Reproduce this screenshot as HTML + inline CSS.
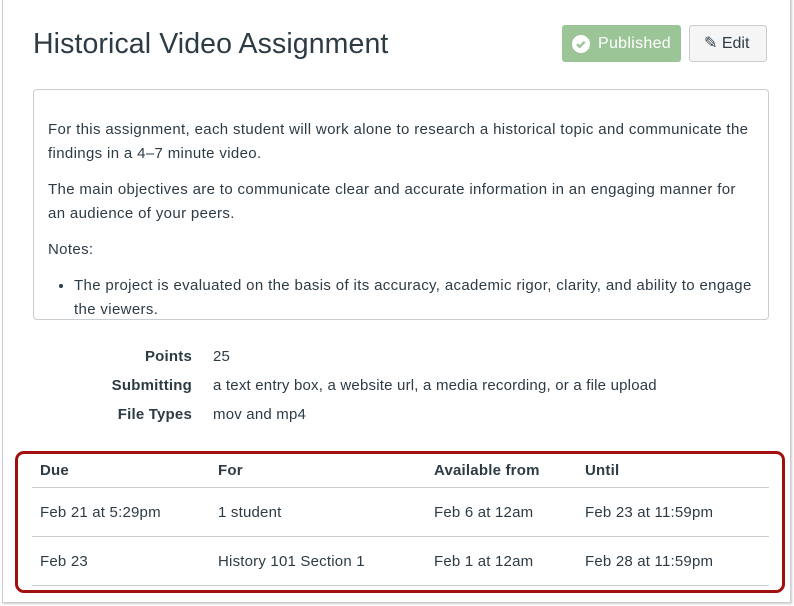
<!DOCTYPE html>
<html><head><style>
body{margin:0;width:794px;height:606px;background:#fff;font-family:"Liberation Sans",sans-serif;color:#2d3b45;position:relative;overflow:hidden}
.frame{position:absolute;left:2px;top:-2px;width:787px;height:603px;border:1px solid #c7cdd1;box-shadow:1px 1px 2px rgba(0,0,0,.2)}
h1{position:absolute;left:33px;top:28px;margin:0;font-weight:normal;font-size:28.5px;color:#2d3b45;letter-spacing:0.1px}
.pub{position:absolute;left:562px;top:25px;width:119px;height:37px;background:#9bc497;border-radius:3px;color:#fff;font-size:16px;box-sizing:border-box;padding-left:36px;line-height:37px;letter-spacing:0.3px}
.pub svg{position:absolute;left:10px;top:10px}
.edit{position:absolute;left:689px;top:25px;width:78px;height:37px;background:#f5f5f5;border:1px solid #c7cdd1;border-radius:3px;box-sizing:border-box;font-size:16px;line-height:35px;padding-left:14px}
.box{position:absolute;left:33px;top:89px;width:736px;height:231px;border:1px solid #c7cdd1;border-radius:4px;box-sizing:border-box;font-size:15px;line-height:24px;padding:28px 14px 0 14px;overflow:hidden;letter-spacing:0.35px}
.box p{margin:0 0 12px}
.box ul{margin:0;padding-left:26px}
.meta{position:absolute;font-size:15px;letter-spacing:0.2px}
.lbl{position:absolute;right:602px;font-weight:bold;white-space:nowrap}
.val{position:absolute;left:213px;white-space:nowrap}
.red{position:absolute;left:15px;top:451px;width:770px;height:142px;border:3px solid #a30e0e;border-radius:9px;box-sizing:border-box}
.t{position:absolute;font-size:15px;white-space:nowrap;letter-spacing:0.2px}
.hr{position:absolute;left:32px;width:737px;height:1px;background:#c7cdd1}
</style></head><body>
<div class="frame"></div>
<h1>Historical Video Assignment</h1>
<div class="pub"><svg width="18" height="18" viewBox="0 0 18 18"><circle cx="9" cy="9" r="9" fill="#fff"/><path d="M5 9.2l2.6 2.6 5-5" stroke="#9bc497" stroke-width="2.4" fill="none"/></svg>Published</div>
<div class="edit">✎ Edit</div>
<div class="box">
<p>For this assignment, each student will work alone to research a historical topic and communicate the findings in a 4–7 minute video.</p>
<p>The main objectives are to communicate clear and accurate information in an engaging manner for<br>an audience of your peers.</p>
<p>Notes:</p>
<ul><li>The project is evaluated on the basis of its accuracy, academic rigor, clarity, and ability to engage<br>the viewers.</li></ul>
</div>
<div class="lbl meta" style="top:348px">Points</div><div class="val meta" style="top:348px">25</div>
<div class="lbl meta" style="top:377px">Submitting</div><div class="val meta" style="top:377px">a text entry box, a website url, a media recording, or a file upload</div>
<div class="lbl meta" style="top:406px">File Types</div><div class="val meta" style="top:406px">mov and mp4</div>
<div class="red"></div>
<div class="t" style="left:40px;top:462px;font-weight:bold">Due</div>
<div class="t" style="left:218px;top:462px;font-weight:bold">For</div>
<div class="t" style="left:434px;top:462px;font-weight:bold">Available from</div>
<div class="t" style="left:585px;top:462px;font-weight:bold">Until</div>
<div class="hr" style="top:487px"></div>
<div class="t" style="left:40px;top:504px">Feb 21 at 5:29pm</div>
<div class="t" style="left:218px;top:504px">1 student</div>
<div class="t" style="left:434px;top:504px">Feb 6 at 12am</div>
<div class="t" style="left:585px;top:504px">Feb 23 at 11:59pm</div>
<div class="hr" style="top:536px"></div>
<div class="t" style="left:40px;top:553px">Feb 23</div>
<div class="t" style="left:218px;top:553px">History 101 Section 1</div>
<div class="t" style="left:434px;top:553px">Feb 1 at 12am</div>
<div class="t" style="left:585px;top:553px">Feb 28 at 11:59pm</div>
<div class="hr" style="top:585px"></div>
</body></html>
